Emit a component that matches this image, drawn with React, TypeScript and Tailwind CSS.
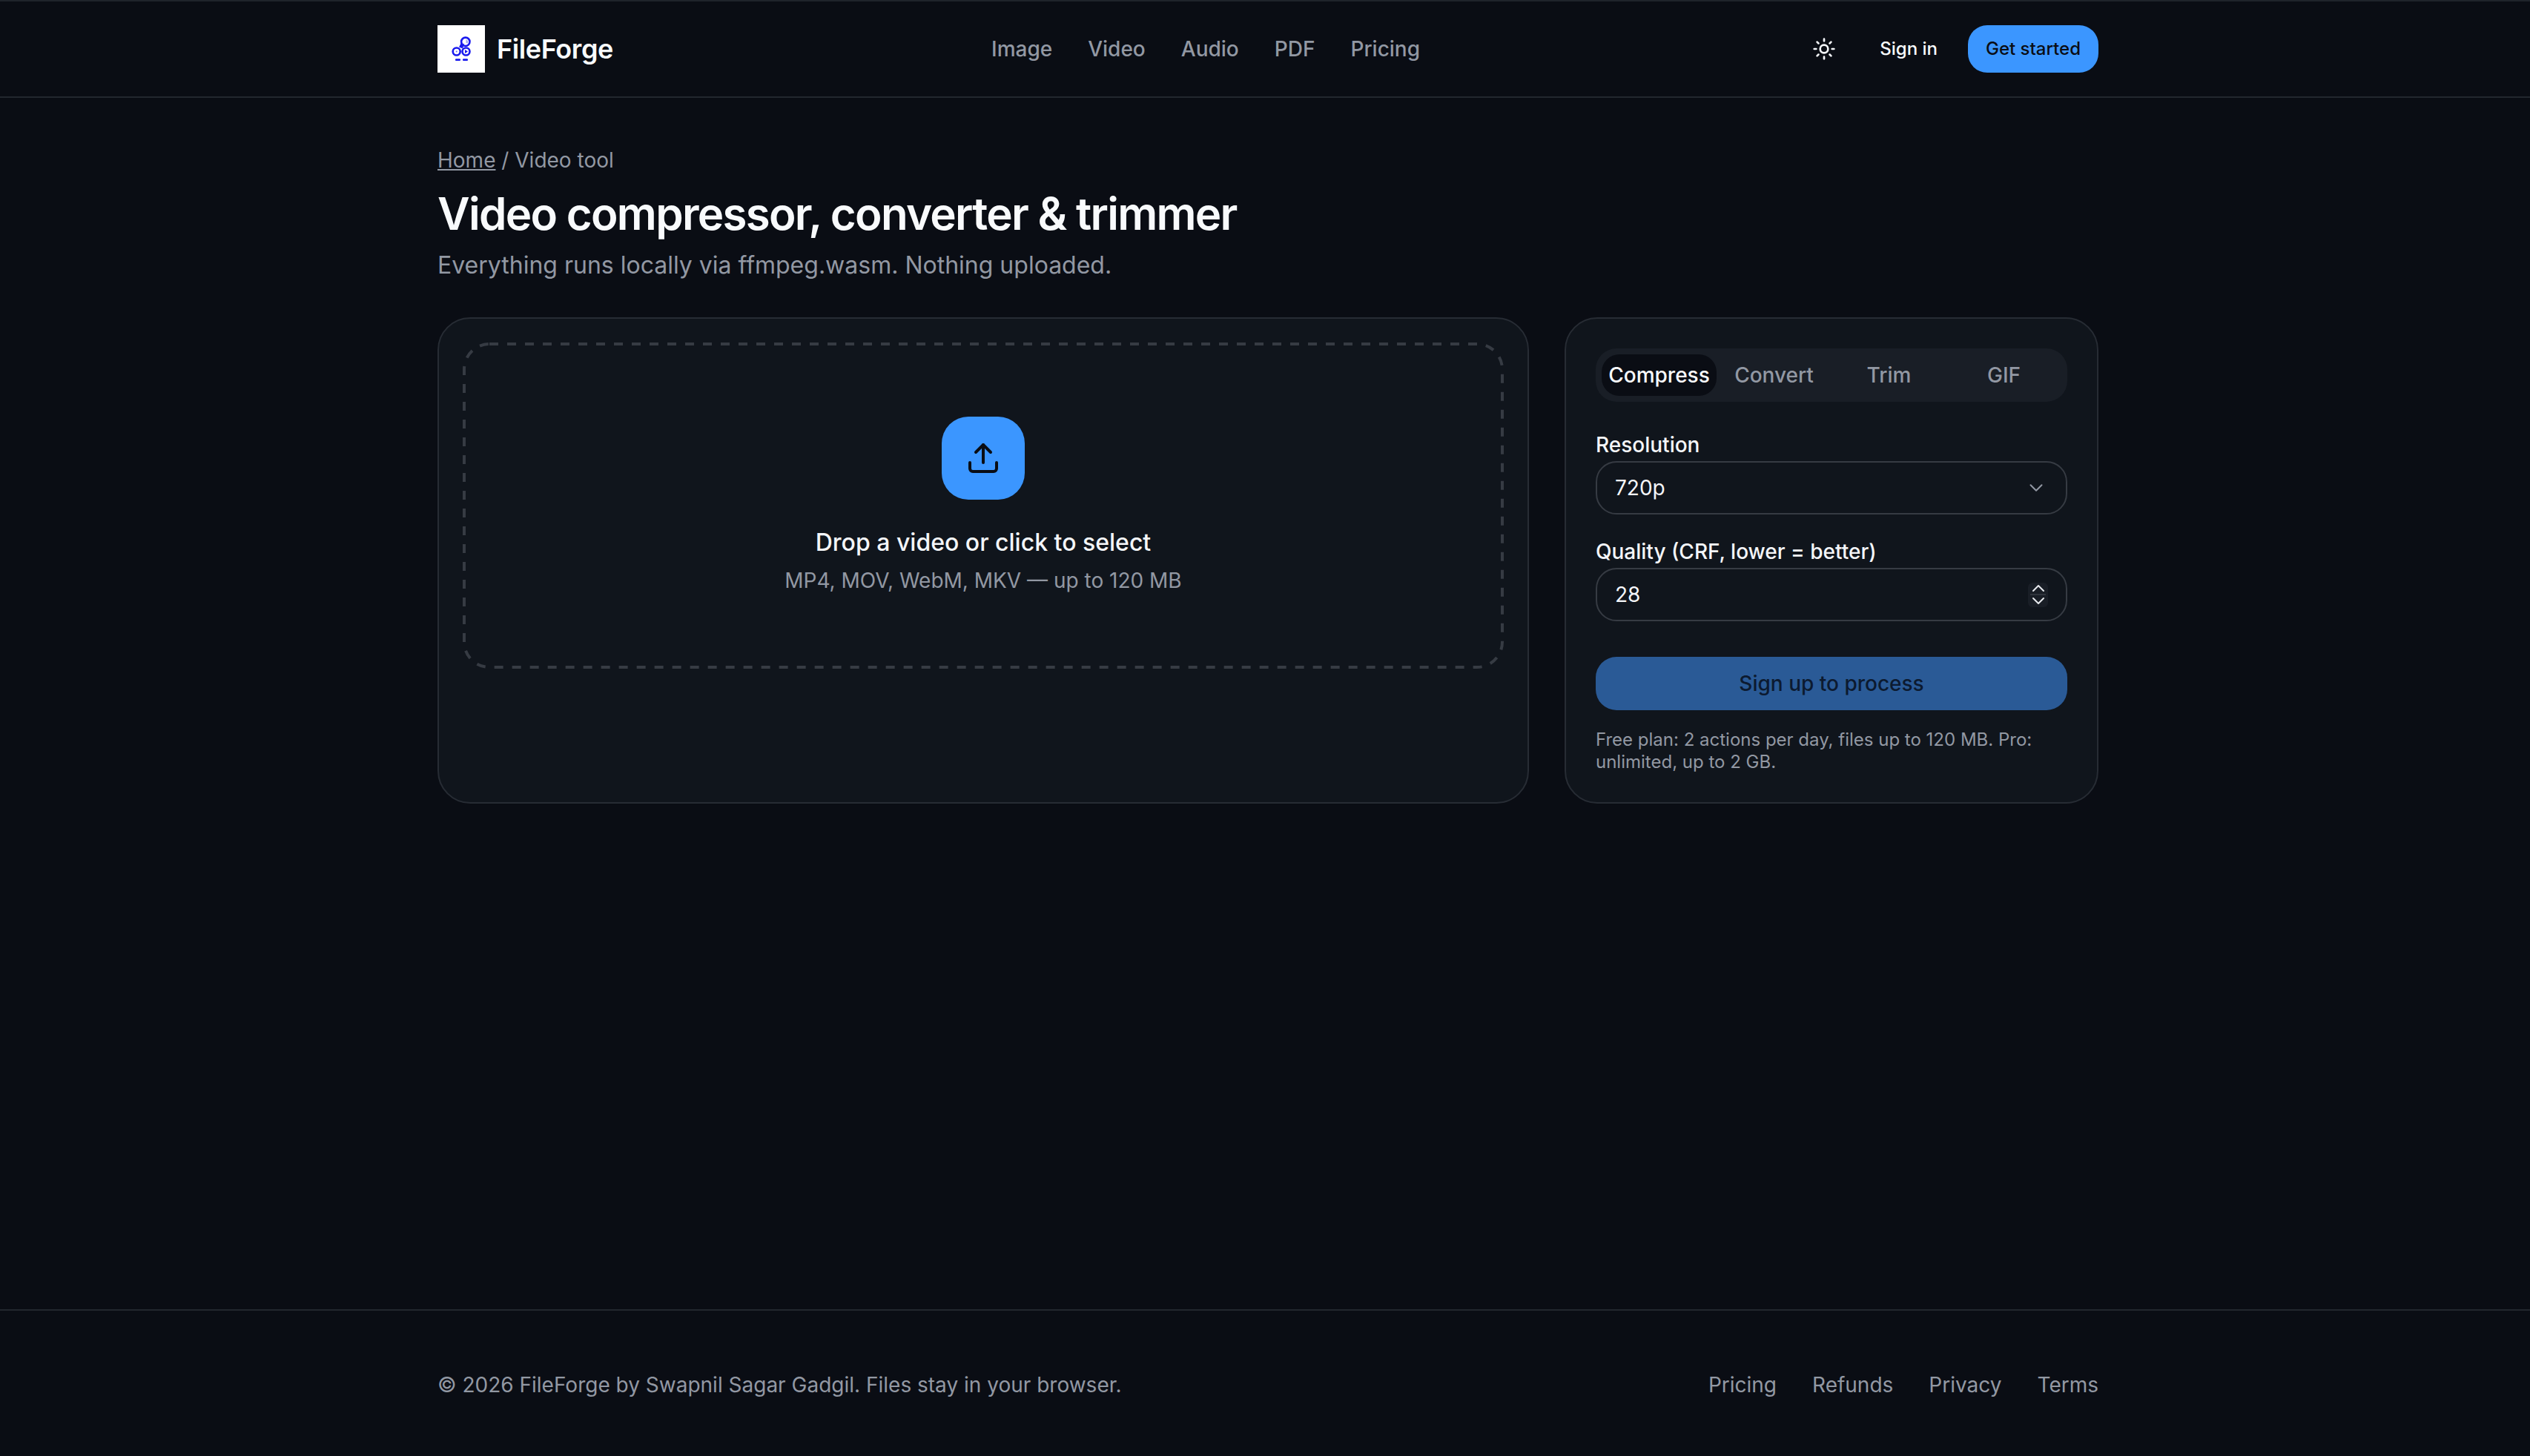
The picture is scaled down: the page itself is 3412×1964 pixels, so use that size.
import { Sun, Upload, ChevronDown } from 'lucide-react'

const navLinks = ['Image', 'Video', 'Audio', 'PDF', 'Pricing']
const footerLinks = ['Pricing', 'Refunds', 'Privacy', 'Terms']
const tabs = ['Compress', 'Convert', 'Trim', 'GIF']

function Logo() {
  return (
    <div className="w-16 h-16 bg-white shrink-0">
      <svg viewBox="0 0 64 64" className="w-16 h-16" fill="none">
        <circle cx="37.800" cy="22.300" r="5.700" stroke="#1a1aee" strokeWidth="2.600" />
        <path d="M38.500 18.800l2.500 2.500v3h-2.500z" fill="#a9adf0" />
        <path d="M36 24.500l-1.500 1-2-3-3.500 7 5 2z" fill="#1a1aee" />
        <circle cx="25.700" cy="35.500" r="5" fill="#ffffff" stroke="#1a1aee" strokeWidth="2.600" />
        <circle cx="25.700" cy="35.500" r="1" fill="#6a6af2" />
        <circle cx="38.500" cy="35.500" r="5" fill="#ffffff" stroke="#1a1aee" strokeWidth="2.600" />
        <path d="M37 33l4 2.500-4 2.500z" fill="#1a1aee" />
        <path d="M25.300 46.700h4.400M35.300 46.700h4.400" stroke="#1a1aee" strokeWidth="2.800" strokeLinecap="round" />
      </svg>
    </div>
  )
}

function Field({ label, children }: { label: string; children: React.ReactNode }) {
  return (
    <div>
      <div className="text-[28px] leading-[40px] font-medium text-[#f4f6f9] mb-[2px]">{label}</div>
      <div className="h-[72px] flex items-center justify-between px-[24px] border-2 border-[#363b43] rounded-[28px] text-[28px] text-[#f4f6f9]">
        {children}
      </div>
    </div>
  )
}

function Stepper() {
  return (
    <div className="w-[27px] h-[33px] rounded-[6px] bg-[#191e26] flex flex-col items-center justify-center">
      <svg width="18" height="11" viewBox="0 0 18 11" fill="none">
        <path d="M2 9l7-7 7 7" stroke="#e6e8ec" strokeWidth="2" strokeLinecap="round" strokeLinejoin="round" />
      </svg>
      <div className="w-[21px] h-[2px] my-[2px] bg-[#2f343c]" />
      <svg width="18" height="11" viewBox="0 0 18 11" fill="none">
        <path d="M2 2l7 7 7-7" stroke="#e6e8ec" strokeWidth="2" strokeLinecap="round" strokeLinejoin="round" />
      </svg>
    </div>
  )
}

export default function App() {
  return (
    <div
      className="min-h-screen flex flex-col bg-[#0a0d14] border-t-2 border-[#1f242b] text-[#f4f6f9]"
      style={{ fontFamily: 'Inter, "Liberation Sans", sans-serif' }}
    >
      {/* Header */}
      <header className="h-[130px] border-b-2 border-[#22272e] shrink-0">
        <div className="ml-[590px] w-[2240px] h-full flex items-center justify-between">
          <div className="flex items-center gap-4 w-[747px]">
            <Logo />
            <span className="text-[36px] font-semibold text-[#f8fafc] tracking-[-0.4px]">FileForge</span>
          </div>
          <nav className="flex items-center gap-12 flex-1">
            {navLinks.map((l) => (
              <a key={l} className="text-[28px] font-medium text-[#9298a3]">
                {l}
              </a>
            ))}
          </nav>
          <div className="flex items-center gap-4">
            <div className="w-16 h-16 flex items-center justify-center">
              <Sun size={32} className="text-[#f4f6f9]" />
            </div>
            <a className="pl-[27px] pr-[25px] text-[24px] font-medium text-[#f8fafc]">Sign in</a>
            <a className="h-16 w-[176px] flex items-center justify-center rounded-[26px] bg-[#3b96ff] text-[24px] font-medium text-[#0a0d14]">
              Get started
            </a>
          </div>
        </div>
      </header>

      {/* Main */}
      <main className="flex-1 ml-[590px] w-[2240px] pt-[64px]">
        <div className="text-[28px] leading-[40px] text-[#9298a3]">
          <a className="underline">Home</a> / Video tool
        </div>
        <h1 className="mt-[16px] text-[60px] leading-[72px] font-semibold text-[#f8fafc] tracking-[-1.7px]">
          Video compressor, converter &amp; trimmer
        </h1>
        <p className="mt-[10px] text-[32px] leading-[48px] text-[#9298a3]">
          Everything runs locally via ffmpeg.wasm. Nothing uploaded.
        </p>

        <div className="mt-[46px] flex gap-[48px]">
          {/* Drop area */}
          <section className="w-[1472px] h-[656px] p-[32px] bg-[#10151c] border-2 border-[#272c34] rounded-[44px]">
            <div className="relative h-[440px] flex flex-col items-center pt-[100px]">
              <svg className="absolute inset-0" width="1404" height="440" fill="none">
                <rect x="2" y="2" width="1400" height="436" rx="34" stroke="#363b43" strokeWidth="4" strokeDasharray="12 12" />
              </svg>
              <div className="w-[112px] h-[112px] flex items-center justify-center rounded-[36px] bg-[#3b96ff]">
                <Upload size={48} className="text-[#0a0d14]" />
              </div>
              <div className="mt-[36px] text-[32px] leading-[44px] font-medium text-[#f4f6f9]">
                Drop a video or click to select
              </div>
              <div className="mt-[7px] text-[28px] leading-[44px] text-[#9298a3]">
                MP4, MOV, WebM, MKV — up to 120 MB
              </div>
            </div>
          </section>

          {/* Options */}
          <aside className="w-[720px] h-[656px] p-[40px] bg-[#10151c] border-2 border-[#272c34] rounded-[44px]">
            <div className="h-[72px] p-[8px] grid grid-cols-4 rounded-[28px] bg-[#191e26]">
              {tabs.map((t, i) => (
                <div
                  key={t}
                  className={
                    i === 0
                      ? 'flex items-center justify-center rounded-[24px] bg-[#0a0d14] text-[28px] font-medium text-[#f8fafc]'
                      : 'flex items-center justify-center text-[28px] font-medium text-[#9298a3]'
                  }
                >
                  {t}
                </div>
              ))}
            </div>

            <div className="mt-[38px] flex flex-col gap-[30px]">
              <Field label="Resolution">
                <span>720p</span>
                <ChevronDown size={30} strokeWidth={1.6} className="text-[#9298a3] mr-[1px]" />
              </Field>
              <Field label="Quality (CRF, lower = better)">
                <span>28</span>
                <Stepper />
              </Field>
            </div>

            <button className="mt-[48px] w-full h-[72px] rounded-[28px] bg-[#2a5a96] text-[28px] font-medium text-[#0c1a30]">
              Sign up to process
            </button>
            <p className="mt-[25px] text-[24px] leading-[30px] text-[#9298a3]">
              Free plan: 2 actions per day, files up to 120 MB. Pro: unlimited, up to 2 GB.
            </p>
          </aside>
        </div>
      </main>

      {/* Footer */}
      <footer className="h-[198px] pt-[4px] border-t-2 border-[#22272e] shrink-0">
        <div className="ml-[590px] w-[2240px] h-full flex items-center justify-between">
          <span className="text-[28px] text-[#9298a3]">© 2026 FileForge by Swapnil Sagar Gadgil. Files stay in your browser.</span>
          <div className="flex items-center gap-12">
            {footerLinks.map((l) => (
              <a key={l} className="text-[28px] text-[#9298a3]">
                {l}
              </a>
            ))}
          </div>
        </div>
      </footer>
    </div>
  )
}
